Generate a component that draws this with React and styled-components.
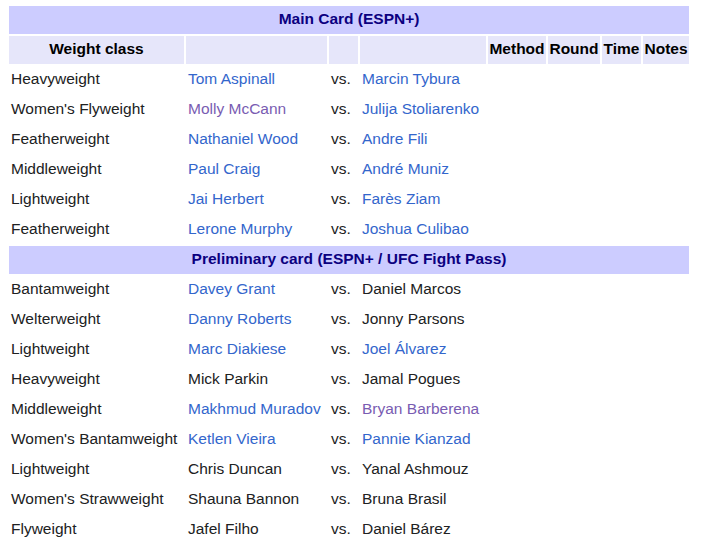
import React from 'react'
import styled, { createGlobalStyle } from 'styled-components'

const GlobalStyle = createGlobalStyle`
    body {
        margin: 4px 0 0 7px;
        background: #ffffff;
        font-family: "Liberation Sans", Arial, sans-serif;
    }
`

const Table = styled.table`
    table-layout: fixed;
    width: 684px;
    border-collapse: separate;
    border-spacing: 2px;
    font-size: 15.5px;
    line-height: 18px;
    color: #202122;
`

const Col = styled.col`
    width: ${p => p.w}px;
`

const SectionHead = styled.th`
    background: #ccccff;
    color: #0b0080;
    font-weight: bold;
    text-align: center;
    padding: 4px 2px 6px;
`

const ColHead = styled.th`
    background: #e6e6fa;
    color: #000000;
    font-weight: bold;
    text-align: center;
    padding: 4px 1px 6px;
    white-space: nowrap;
`

const Cell = styled.td`
    padding: 4px 2px 6px;
    white-space: nowrap;
    overflow: hidden;
`

const Fighter = styled.span`
    color: ${p => (p.kind === 'visited' ? '#795cb2' : p.kind === 'link' ? '#3366cc' : '#202122')};
`

const widths = [175, 141, 29, 126, 58, 52, 39, 46]

const mainCard = [
    ['Heavyweight', ['Tom Aspinall', 'link'], ['Marcin Tybura', 'link']],
    ["Women's Flyweight", ['Molly McCann', 'visited'], ['Julija Stoliarenko', 'link']],
    ['Featherweight', ['Nathaniel Wood', 'link'], ['Andre Fili', 'link']],
    ['Middleweight', ['Paul Craig', 'link'], ['André Muniz', 'link']],
    ['Lightweight', ['Jai Herbert', 'link'], ['Farès Ziam', 'link']],
    ['Featherweight', ['Lerone Murphy', 'link'], ['Joshua Culibao', 'link']],
]

const prelims = [
    ['Bantamweight', ['Davey Grant', 'link'], ['Daniel Marcos', 'plain']],
    ['Welterweight', ['Danny Roberts', 'link'], ['Jonny Parsons', 'plain']],
    ['Lightweight', ['Marc Diakiese', 'link'], ['Joel Álvarez', 'link']],
    ['Heavyweight', ['Mick Parkin', 'plain'], ['Jamal Pogues', 'plain']],
    ['Middleweight', ['Makhmud Muradov', 'link'], ['Bryan Barberena', 'visited']],
    ["Women's Bantamweight", ['Ketlen Vieira', 'link'], ['Pannie Kianzad', 'link']],
    ['Lightweight', ['Chris Duncan', 'plain'], ['Yanal Ashmouz', 'plain']],
    ["Women's Strawweight", ['Shauna Bannon', 'plain'], ['Bruna Brasil', 'plain']],
    ['Flyweight', ['Jafel Filho', 'plain'], ['Daniel Bárez', 'plain']],
]

const BoutRow = ({ bout }) => {
    const [weight, [red, redKind], [blue, blueKind]] = bout
    return (
        <tr>
            <Cell>{weight}</Cell>
            <Cell><Fighter kind={redKind}>{red}</Fighter></Cell>
            <Cell>vs.</Cell>
            <Cell><Fighter kind={blueKind}>{blue}</Fighter></Cell>
            <Cell />
            <Cell />
            <Cell />
            <Cell />
        </tr>
    )
}

const App = () => {
    return (
        <>
            <GlobalStyle />
            <Table>
                <colgroup>
                    {widths.map((w, i) => <Col key={i} w={w} />)}
                </colgroup>
                <tbody>
                    <tr>
                        <SectionHead colSpan={8}>Main Card (ESPN+)</SectionHead>
                    </tr>
                    <tr>
                        <ColHead>Weight class</ColHead>
                        <ColHead />
                        <ColHead />
                        <ColHead />
                        <ColHead>Method</ColHead>
                        <ColHead>Round</ColHead>
                        <ColHead>Time</ColHead>
                        <ColHead>Notes</ColHead>
                    </tr>
                    {mainCard.map((b, i) => <BoutRow key={'m' + i} bout={b} />)}
                    <tr>
                        <SectionHead colSpan={8}>Preliminary card (ESPN+ / UFC Fight Pass)</SectionHead>
                    </tr>
                    {prelims.map((b, i) => <BoutRow key={'p' + i} bout={b} />)}
                </tbody>
            </Table>
        </>
    )
}

export default App
